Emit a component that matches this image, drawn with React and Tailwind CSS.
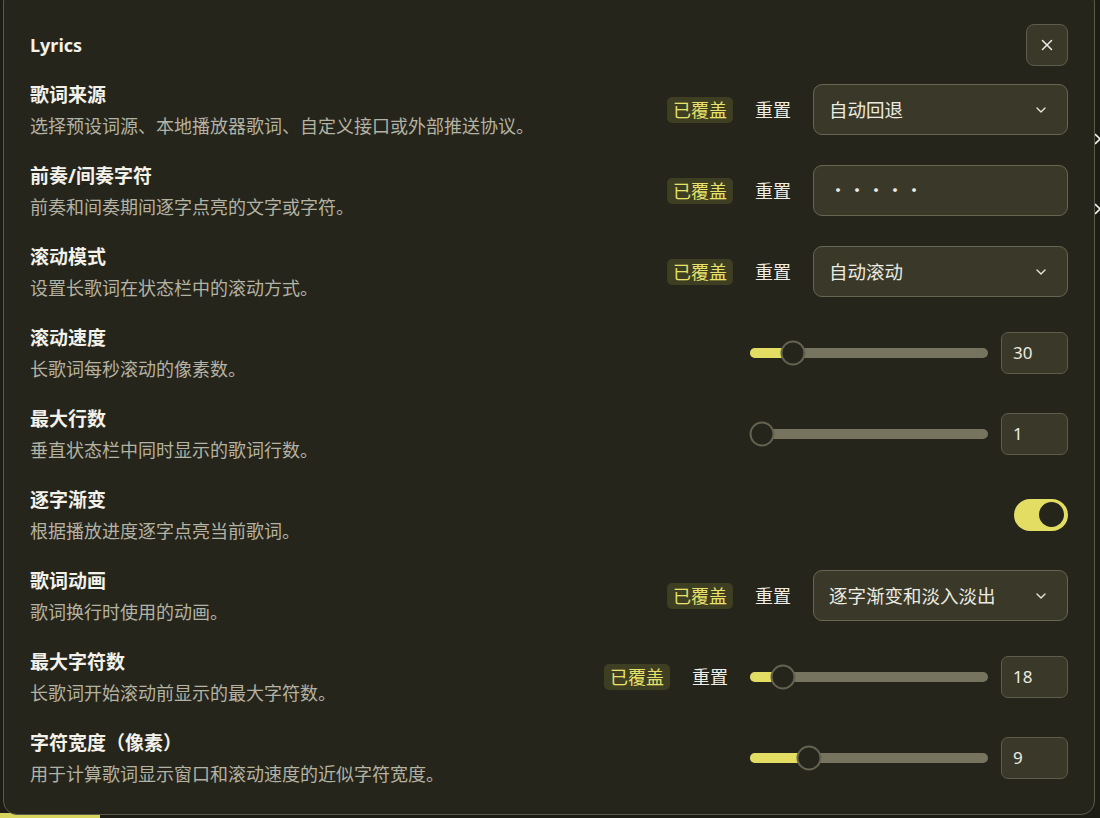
import React from "react";
import { X, ChevronDown } from "lucide-react";

const rows = [
  { title: "歌词来源", desc: "选择预设词源、本地播放器歌词、自定义接口或外部推送协议。", override: true, control: { type: "select", value: "自动回退" } },
  { title: "前奏/间奏字符", desc: "前奏和间奏期间逐字点亮的文字或字符。", override: true, control: { type: "text", value: "・・・・・" } },
  { title: "滚动模式", desc: "设置长歌词在状态栏中的滚动方式。", override: true, control: { type: "select", value: "自动滚动" } },
  { title: "滚动速度", desc: "长歌词每秒滚动的像素数。", override: false, control: { type: "slider", value: "30", pct: 0.146 } },
  { title: "最大行数", desc: "垂直状态栏中同时显示的歌词行数。", override: false, control: { type: "slider", value: "1", pct: 0 } },
  { title: "逐字渐变", desc: "根据播放进度逐字点亮当前歌词。", override: false, control: { type: "toggle" } },
  { title: "歌词动画", desc: "歌词换行时使用的动画。", override: true, control: { type: "select", value: "逐字渐变和淡入淡出" } },
  { title: "最大字符数", desc: "长歌词开始滚动前显示的最大字符数。", override: true, control: { type: "slider", value: "18", pct: 0.098 } },
  { title: "字符宽度（像素）", desc: "用于计算歌词显示窗口和滚动速度的近似字符宽度。", override: false, control: { type: "slider", value: "9", pct: 0.22 } },
];

function Slider({ value, pct }) {
  const center = 12 + pct * 214;
  return (
    <div className="flex items-center gap-[13px]">
      <div className="relative h-[10px] w-[238px] rounded-full bg-[#76745f]">
        <div className="h-full rounded-full bg-[#e3dd63]" style={{ width: `${center}px` }} />
        <div
          className="absolute top-1/2 h-[25px] w-[25px] -translate-x-1/2 -translate-y-1/2 rounded-full border-2 border-[#64634f] bg-[#25251c]"
          style={{ left: `${center}px` }}
        />
      </div>
      <div className="flex h-[42px] w-[67px] items-center rounded-[7px] border border-[#5e5d4b] bg-[#3a3929] px-[11px] text-[17px] text-[#ecebe2]">
        {value}
      </div>
    </div>
  );
}

function Control({ c }) {
  if (c.type === "select") {
    return (
      <div className="flex h-[51px] w-[255px] items-center justify-between rounded-[9px] border border-[#676651] bg-[#3a3929] pl-[15px] pr-[18px] text-[18.5px] text-[#ecebe2]">
        <span>{c.value}</span>
        <ChevronDown size={16} strokeWidth={2} className="text-[#e8e6d8]" />
      </div>
    );
  }
  if (c.type === "text") {
    return (
      <div className="flex h-[51px] w-[255px] items-center rounded-[9px] border border-[#676651] bg-[#3a3929] pl-[15px] text-[18px] tracking-[1px] text-[#ecebe2]">
        {c.value}
      </div>
    );
  }
  if (c.type === "slider") return <Slider value={c.value} pct={c.pct} />;
  return (
    <div className="flex h-[32px] w-[54px] items-center justify-end rounded-full bg-[#e3dd63] pr-[4px]">
      <div className="h-[25px] w-[25px] rounded-full bg-[#25251c]" />
    </div>
  );
}

export default function App() {
  return (
    <div
      className="relative h-[818px] w-[1100px] overflow-hidden bg-[#1d1d16]"
      style={{ fontFamily: '"Noto Sans", "Noto Sans CJK SC", sans-serif' }}
    >
      <div className="absolute bottom-0 left-0 h-[5px] w-[100px] bg-[#d8d35e]" />
      <svg className="absolute left-[1095px] top-[133px]" width="6" height="14" viewBox="0 0 6 14">
        <path d="M0 1 L5 6 L0 11" stroke="#f2f2f2" strokeWidth="1.6" fill="none" />
      </svg>
      <svg className="absolute left-[1095px] top-[203px]" width="6" height="14" viewBox="0 0 6 14">
        <path d="M0 1 L5 6 L0 11" stroke="#f2f2f2" strokeWidth="1.6" fill="none" />
      </svg>
      <div className="relative ml-[3px] mt-[-12px] h-[827px] w-[1092px] rounded-[14px] border border-[#5b5a49] bg-[#25251c] px-[26px] pt-[35px]">
        <div className="mb-[3px] flex h-[42px] items-center justify-between">
          <div className="text-[18px] font-bold text-[#f2f1ea]">Lyrics</div>
          <div className="flex h-[42px] w-[42px] items-center justify-center rounded-[8px] border border-[#5e5d4b] bg-[#3a3929]">
            <X size={18} strokeWidth={2} className="text-[#efefe8]" />
          </div>
        </div>
        {rows.map((r) => (
          <div key={r.title} className="flex h-[81px] items-center justify-between">
            <div className="flex flex-col">
              <div className="text-[19px] font-bold leading-[26px] text-[#f2f1ea]">{r.title}</div>
              <div className="mt-[6px] text-[18px] leading-[24px] text-[#b4b2a2]">{r.desc}</div>
            </div>
            <div className="flex items-center">
              {r.override && (
                <div className="mr-[12px] flex items-center gap-[12px]">
                  <span className="rounded-[5px] bg-[#3e3e23] px-[6px] text-[18px] leading-[26px] text-[#e8e26a]">已覆盖</span>
                  <span className="px-[10px] text-[18px] leading-[26px] text-[#efeee6]">重置</span>
                </div>
              )}
              <Control c={r.control} />
            </div>
          </div>
        ))}
      </div>
    </div>
  );
}
